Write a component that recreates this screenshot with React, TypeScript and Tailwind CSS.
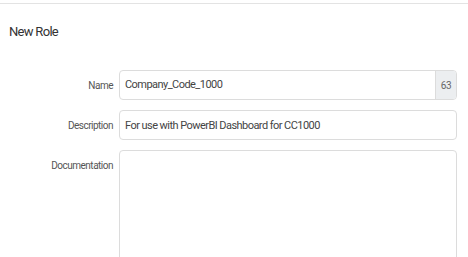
import React from 'react';

const Label = ({ children, top }: { children: React.ReactNode; top?: boolean }) => (
  <label
    className={`w-[113px] shrink-0 text-right text-[10px] tracking-[-0.5px] text-[#555] ${top ? 'pt-[8px]' : 'self-center'}`}
  >
    {children}
  </label>
);

export default function App() {
  return (
    <div className="w-[468px] h-[257px] overflow-hidden bg-white pt-[3px] font-['Roboto',sans-serif]">
      <div className="border-t border-[#e3e3e3]">
        {/* Header */}
        <div className="px-[9px] pt-[20px] pb-[30px]">
          <h2 className="text-[13px] leading-[16px] text-[#333] tracking-[-0.7px]">New Role</h2>
        </div>

        {/* Form */}
        <div className="flex flex-col gap-[10px] pr-[11px]">
          <div className="flex gap-[6px]">
            <Label>Name</Label>
            <div className="flex-1 flex h-[30px] border border-[#dcdcdc] rounded-[4px] overflow-hidden">
              <input
                className="flex-1 px-[5px] text-[11px] text-[#444] outline-none tracking-[-0.55px]"
                defaultValue="Company_Code_1000"
              />
              <span className="w-[21px] flex items-center justify-center bg-[#eceef0] border-l border-[#dcdcdc] text-[10px] tracking-[-0.4px] text-[#666]">
                63
              </span>
            </div>
          </div>
          <div className="flex gap-[6px]">
            <Label>Description</Label>
            <input
              className="flex-1 h-[30px] border border-[#dcdcdc] rounded-[4px] px-[5px] text-[11px] text-[#444] outline-none tracking-[-0.55px]"
              defaultValue="For use with PowerBI Dashboard for CC1000"
            />
          </div>
          <div className="flex gap-[6px]">
            <Label top>Documentation</Label>
            <textarea className="flex-1 h-[140px] border border-[#dcdcdc] rounded-[4px] resize-none outline-none" />
          </div>
        </div>
      </div>
    </div>
  );
}
